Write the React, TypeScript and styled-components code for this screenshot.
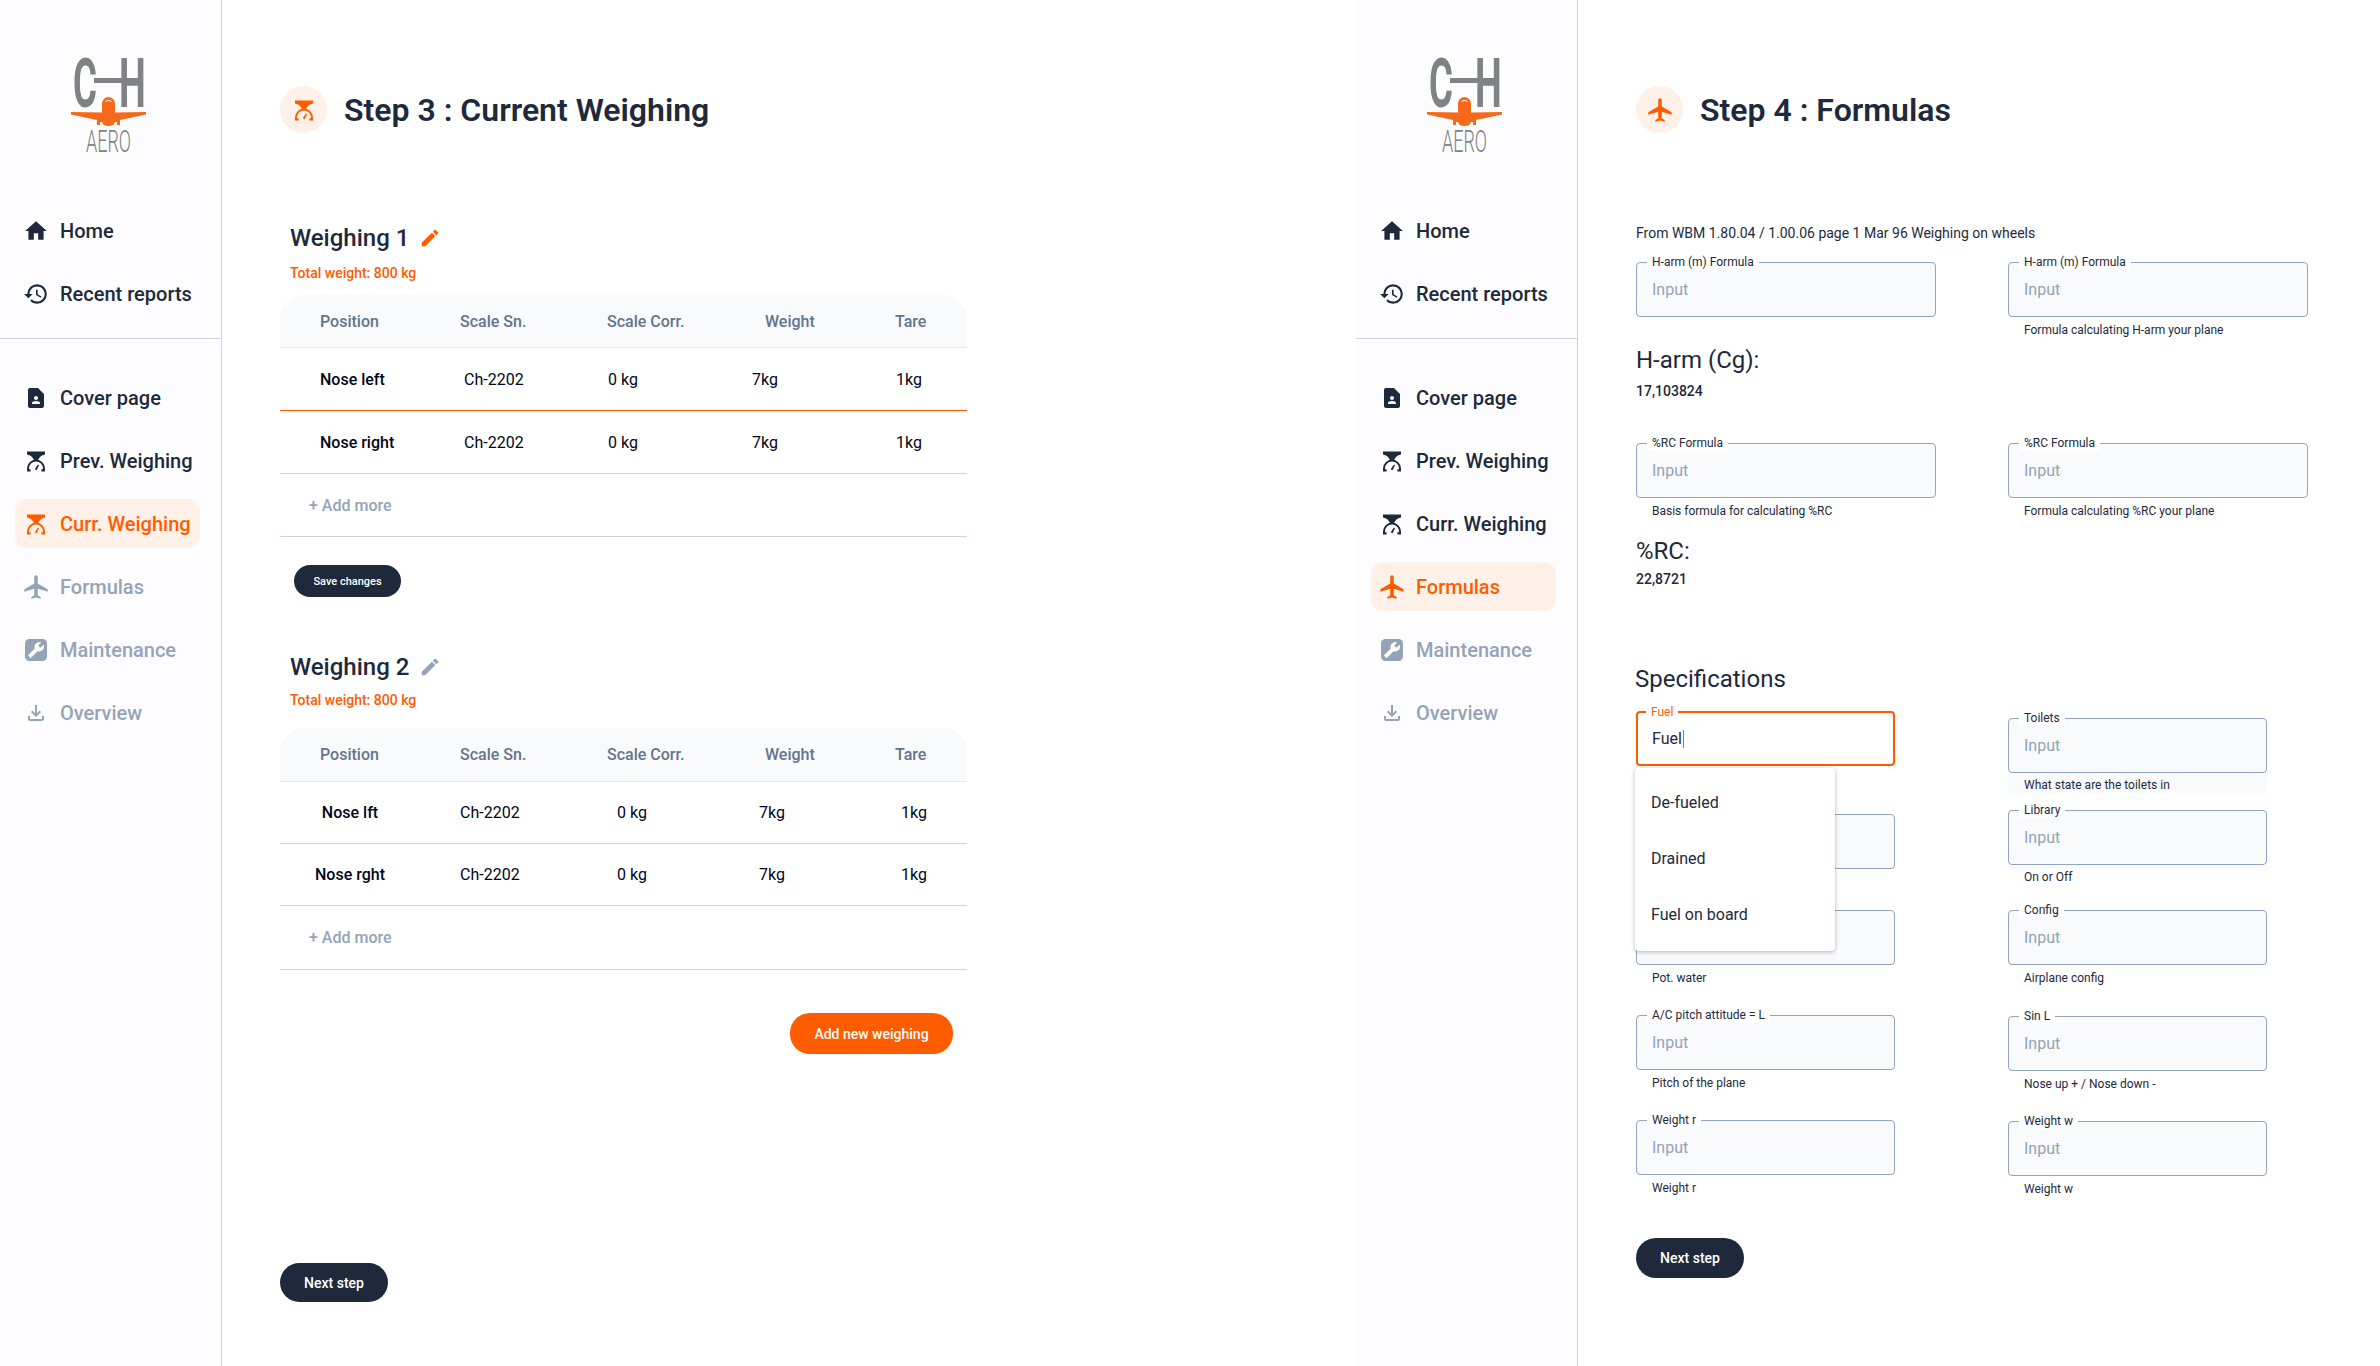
import React from 'react'
import styled, { createGlobalStyle } from 'styled-components'
import {
  MdHome,
  MdHistory,
  MdContactPage,
  MdAirplanemodeActive,
  MdOutlineFileDownload,
  MdEdit,
} from 'react-icons/md'

const ORANGE = '#ff5c00'
const DARK = '#1e293b'
const MUTED = '#94a3b8'

const GlobalStyle = createGlobalStyle`
  html, body { margin: 0; padding: 0; background: #fff; }
  body { font-family: Roboto, "Liberation Sans", sans-serif; color: ${DARK}; }
  * { box-sizing: border-box; }
`

const Page = styled.div`
  display: flex;
  width: 2380px;
  height: 1366px;
  overflow: hidden;
`

const Screen = styled.div<{ $width: number }>`
  display: flex;
  flex: none;
  width: ${(p) => p.$width}px;
  height: 100%;
`

const Sidebar = styled.aside`
  flex: none;
  width: 222px;
  height: 100%;
  padding-top: 40px;
  background: #fdfdff;
  border-right: 1px solid #cbd5e1;
`

const LogoWrap = styled.div`
  display: flex;
  justify-content: center;
  height: 120px;
  margin-bottom: 46px;
  padding-right: 1px;
`

const NavGroup = styled.nav<{ $divided?: boolean }>`
  display: flex;
  flex-direction: column;
  gap: 14px;
  padding-bottom: ${(p) => (p.$divided ? '20px' : '0')};
  margin-bottom: ${(p) => (p.$divided ? '34px' : '0')};
  border-bottom: ${(p) => (p.$divided ? '1px solid #cbd5e1' : 'none')};
`

const NavItem = styled.a<{ $tone: 'dark' | 'active' | 'muted' }>`
  display: flex;
  align-items: center;
  gap: 11px;
  height: 49px;
  margin: 0 21px 0 15px;
  padding-left: 8px;
  border-radius: 12px;
  font-size: 20px;
  font-weight: 500;
  color: ${(p) => (p.$tone === 'active' ? ORANGE : p.$tone === 'muted' ? MUTED : DARK)};
  background: ${(p) => (p.$tone === 'active' ? '#fff1e8' : 'transparent')};
`

const NavIcon = styled.span`
  display: flex;
  align-items: center;
  justify-content: center;
  flex: none;
  width: 26px;
  height: 26px;
  svg { flex: none; }
`

const Main = styled.main`
  flex: 1;
  padding: 86px 0 0 58px;
`

const StepHeader = styled.header`
  display: flex;
  align-items: center;
  gap: 17px;
  height: 47px;
`

const StepBadge = styled.span`
  display: flex;
  align-items: center;
  justify-content: center;
  width: 47px;
  height: 47px;
  border-radius: 50%;
  background: #fff1e8;
  color: ${ORANGE};
`

const StepTitle = styled.h1`
  margin: 0;
  font-size: 32px;
  line-height: 40px;
  font-weight: 600;
`

const WeighingTitle = styled.h2<{ $top: number }>`
  display: flex;
  align-items: center;
  gap: 10px;
  margin: ${(p) => p.$top}px 0 0 10px;
  font-size: 24px;
  line-height: 28px;
  font-weight: 500;
`

const TotalWeight = styled.div<{ $top: number; $after: number }>`
  margin: ${(p) => p.$top}px 0 ${(p) => p.$after}px 10px;
  font-size: 14px;
  line-height: 20px;
  font-weight: 500;
  color: ${ORANGE};
`

const WeighTable = styled.div`
  width: 687px;
`

const HeadRow = styled.div<{ $height: number }>`
  display: grid;
  grid-template-columns: 140px 147px 158px 130px 1fr;
  align-items: center;
  height: ${(p) => p.$height}px;
  padding-left: 40px;
  background: #f8fafc;
  border-bottom: 1px solid #e2e8f0;
  border-radius: 24px 24px 0 0;
  font-size: 16px;
  font-weight: 500;
  color: #64748b;
`

const BodyRow = styled.div<{ $height: number; $columns: string; $inset: number; $line?: string }>`
  display: grid;
  grid-template-columns: ${(p) => p.$columns};
  align-items: center;
  height: ${(p) => p.$height}px;
  padding-left: ${(p) => p.$inset}px;
  border-bottom: 1px solid ${(p) => p.$line ?? '#cbd5e1'};
  font-size: 16px;
  color: #020617;
`

const PositionCell = styled.span<{ $centered?: boolean }>`
  width: 140px;
  text-align: ${(p) => (p.$centered ? 'center' : 'left')};
  font-weight: 500;
`

const AddMoreRow = styled.div<{ $height: number }>`
  display: flex;
  align-items: center;
  height: ${(p) => p.$height}px;
  padding-left: 29px;
  border-bottom: 1px solid #cbd5e1;
  font-size: 16px;
  font-weight: 500;
  color: ${MUTED};
`

const PillButton = styled.button<{ $orange?: boolean; $width: number; $height: number; $small?: boolean }>`
  display: block;
  width: ${(p) => p.$width}px;
  height: ${(p) => p.$height}px;
  padding: 0;
  border: none;
  border-radius: 20px;
  font-family: inherit;
  font-size: ${(p) => (p.$small ? '11px' : '14px')};
  font-weight: 500;
  color: #fff;
  background: ${(p) => (p.$orange ? ORANGE : DARK)};
`

const SaveWrap = styled.div`
  margin: 28px 0 0 14px;
`

const AddWeighingWrap = styled.div`
  display: flex;
  justify-content: flex-end;
  width: 673px;
  margin-top: 43px;
`

const NextWrap = styled.div<{ $top: number }>`
  margin-top: ${(p) => p.$top}px;
`

const SourceNote = styled.p`
  margin: 90px 0 19px;
  font-size: 14px;
  line-height: 20px;
`

const FormulaRow = styled.div`
  display: grid;
  grid-template-columns: 300px 300px;
  column-gap: 72px;
`

const ResultTitle = styled.h3<{ $top: number }>`
  margin: ${(p) => p.$top}px 0 0;
  font-size: 24px;
  line-height: 28px;
  font-weight: 400;
`

const ResultValue = styled.div<{ $top: number; $after: number }>`
  margin: ${(p) => p.$top}px 0 ${(p) => p.$after}px;
  font-size: 14px;
  line-height: 20px;
  font-weight: 500;
`

const SpecTitle = styled.h3`
  margin: 76px 0 18px -1px;
  font-size: 24px;
  line-height: 28px;
  font-weight: 400;
`

const SpecGrid = styled.div`
  display: grid;
  grid-template-columns: 259px 259px;
  column-gap: 113px;
`

const SpecColumn = styled.div`
  display: flex;
  flex-direction: column;
`

const FieldWrap = styled.div<{ $top?: number }>`
  position: relative;
  margin-top: ${(p) => p.$top ?? 0}px;
`

const FieldBox = styled.div<{ $focused?: boolean }>`
  position: relative;
  display: flex;
  align-items: center;
  height: 55px;
  padding-left: ${(p) => (p.$focused ? '14px' : '15px')};
  border: ${(p) => (p.$focused ? `2px solid ${ORANGE}` : '1px solid #94a3c0')};
  border-radius: 4px;
  background: ${(p) => (p.$focused ? '#fff' : '#f8fafc')};
  font-size: 16px;
  color: ${(p) => (p.$focused ? DARK : MUTED)};
`

const FieldLabel = styled.label<{ $focused?: boolean }>`
  position: absolute;
  top: -9px;
  left: ${(p) => (p.$focused ? '8px' : '10px')};
  padding: 0 5px;
  background: #fff;
  font-size: 12px;
  line-height: 16px;
  color: ${(p) => (p.$focused ? ORANGE : DARK)};
`

const Caret = styled.span`
  width: 1px;
  height: 18px;
  margin-left: 1px;
  background: ${ORANGE};
`

const Helper = styled.div<{ $pad?: number; $band?: number }>`
  height: ${(p) => (p.$pad ?? 5) + 16}px;
  padding: ${(p) => p.$pad ?? 5}px 0 0 16px;
  font-size: 12px;
  line-height: 16px;
  background: ${(p) => (p.$band ? `linear-gradient(#f8fafc, #f8fafc) no-repeat top / 100% ${p.$band}px` : 'none')};
`

const Dropdown = styled.ul`
  position: absolute;
  top: 57px;
  left: -1px;
  z-index: 2;
  width: 200px;
  height: 183px;
  margin: 0;
  padding: 6px 0 0 16px;
  list-style: none;
  background: #fff;
  border-radius: 4px;
  box-shadow: 0 1px 4px rgba(15, 23, 42, 0.3);
`

const DropdownItem = styled.li`
  display: flex;
  align-items: center;
  height: 56px;
  font-size: 16px;
  color: ${DARK};
`

const ScaleIcon = () => (
  <svg width={24} height={24} viewBox="0 0 24 24" fill="currentColor">
    <path d="M3 2.500h18v3c-3.500.5-5.500 2.400-7 5.500h-4C8.500 7.900 6.500 6 3 5.500z" />
    <path
      d="M4 21.500v-2a8 8 0 0 1 16 0v2"
      fill="none"
      stroke="currentColor"
      strokeWidth="2"
    />
    <path d="M3 20.300h3.600v2.200H3zM17.400 20.300H21v2.200h-3.600z" />
    <path d="M10.700 20.300l3.200-4.800 1.100.7-2.400 5z" />
  </svg>
)

const WrenchIcon = () => (
  <svg width={24} height={24} viewBox="0 0 24 24">
    <rect x="1" y="1" width="22" height="22" rx="4.500" fill="currentColor" />
    <path
      transform="translate(12 12) scale(-0.72 0.72) translate(-12 -12)"
      fill="#fff"
      d="M22.700 19l-9.100-9.100c.9-2.300.4-5-1.500-6.900-2-2-5-2.400-7.400-1.300L9 6 6 9 1.600 4.700C.4 7.100.9 10.100 2.900 12.100c1.900 1.900 4.600 2.400 6.900 1.500l9.100 9.100c.4.4 1 .4 1.400 0l2.300-2.300c.5-.4.5-1.100.1-1.400z"
    />
  </svg>
)

// logo letters stay real text, scaled to the narrow shape of the mark
const Logo = () => (
  <svg width="80" height="120" viewBox="0 -15 80 120" fontFamily="Roboto, sans-serif">
    <text transform="translate(3 52) scale(0.53 1)" fontSize="69" fontWeight="700" fill="#808285">
      C
    </text>
    <rect x="24" y="23" width="28" height="5" fill="#808285" />
    <text transform="translate(49 52) scale(0.55 1)" fontSize="69" fontWeight="700" fill="#808285">
      H
    </text>
    <path fill="#fff" d="M28 57V44h21v13z" />
    <path
      fill="#f7691a"
      d="M32 57.500V49c0-4 3-7 6.500-7s6.500 3 6.500 7v8.500L76 57v2.500L50 65v5h-3v-3h-2c-1 3-3 4-6.500 4s-5.500-1-6.500-4h-2v3h-3v-5L1 59.500V57z"
    />
    <path d="M35.500 46.500c2-1.300 4-1.300 6 0" fill="none" stroke="#fff" strokeWidth="1" />
    <text transform="translate(16 97) scale(0.58 1)" fontSize="31" fontWeight="300" fill="#808285">
      AERO
    </text>
  </svg>
)

type Active = 'weighing' | 'formulas'
type Tone = 'dark' | 'active' | 'muted'

const SideNav = ({ active }: { active: Active }) => {
  const lower: { label: string; icon: React.ReactNode; tone: Tone }[] = [
    { label: 'Cover page', icon: <MdContactPage size={24} />, tone: 'dark' },
    { label: 'Prev. Weighing', icon: <ScaleIcon />, tone: 'dark' },
    { label: 'Curr. Weighing', icon: <ScaleIcon />, tone: active === 'weighing' ? 'active' : 'dark' },
    { label: 'Formulas', icon: <MdAirplanemodeActive size={28} />, tone: active === 'formulas' ? 'active' : 'muted' },
    { label: 'Maintenance', icon: <WrenchIcon />, tone: 'muted' },
    { label: 'Overview', icon: <MdOutlineFileDownload size={24} />, tone: 'muted' },
  ]
  return (
    <Sidebar>
      <LogoWrap>
        <Logo />
      </LogoWrap>
      <NavGroup $divided>
        <NavItem $tone="dark">
          <NavIcon><MdHome size={26} /></NavIcon>
          Home
        </NavItem>
        <NavItem $tone="dark">
          <NavIcon><MdHistory size={26} /></NavIcon>
          Recent reports
        </NavItem>
      </NavGroup>
      <NavGroup>
        {lower.map((item) => (
          <NavItem key={item.label} $tone={item.tone}>
            <NavIcon>{item.icon}</NavIcon>
            {item.label}
          </NavItem>
        ))}
      </NavGroup>
    </Sidebar>
  )
}

const Field = ({
  label,
  helper,
  top,
  pad,
  band,
}: {
  label?: string
  helper?: string
  top?: number
  pad?: number
  band?: number
}) => (
  <FieldWrap $top={top}>
    <FieldBox>
      {label && <FieldLabel>{label}</FieldLabel>}
      {label && 'Input'}
    </FieldBox>
    {helper && <Helper $pad={pad} $band={band}>{helper}</Helper>}
  </FieldWrap>
)

const HEAD_CELLS = ['Position', 'Scale Sn.', 'Scale Corr.', 'Weight', 'Tare']

const WeighingOne = () => (
  <WeighTable>
    <HeadRow $height={53}>
      {HEAD_CELLS.map((c) => <span key={c}>{c}</span>)}
    </HeadRow>
    {['Nose left', 'Nose right'].map((pos, i) => (
      <BodyRow key={pos} $height={63} $columns="144px 144px 144px 144px 1fr" $inset={40} $line={i === 0 ? ORANGE : undefined}>
        <PositionCell>{pos}</PositionCell>
        <span>Ch-2202</span>
        <span>0 kg</span>
        <span>7kg</span>
        <span>1kg</span>
      </BodyRow>
    ))}
    <AddMoreRow $height={63}>+ Add more</AddMoreRow>
  </WeighTable>
)

const WeighingTwo = () => (
  <WeighTable>
    <HeadRow $height={54}>
      {HEAD_CELLS.map((c) => <span key={c}>{c}</span>)}
    </HeadRow>
    {['Nose lft', 'Nose rght'].map((pos) => (
      <BodyRow key={pos} $height={62} $columns="180px 157px 142px 142px 1fr" $inset={0}>
        <PositionCell $centered>{pos}</PositionCell>
        <span>Ch-2202</span>
        <span>0 kg</span>
        <span>7kg</span>
        <span>1kg</span>
      </BodyRow>
    ))}
    <AddMoreRow $height={64}>+ Add more</AddMoreRow>
  </WeighTable>
)

export default function App() {
  return (
    <Page>
      <GlobalStyle />
      <Screen $width={1356}>
        <SideNav active="weighing" />
        <Main>
          <StepHeader>
            <StepBadge><ScaleIcon /></StepBadge>
            <StepTitle>Step 3 : Current Weighing</StepTitle>
          </StepHeader>

          <WeighingTitle $top={91}>
            Weighing 1
            <MdEdit size={22} color={ORANGE} />
          </WeighingTitle>
          <TotalWeight $top={11} $after={12}>Total weight: 800 kg</TotalWeight>
          <WeighingOne />
          <SaveWrap>
            <PillButton $width={107} $height={32} $small>Save changes</PillButton>
          </SaveWrap>

          <WeighingTitle $top={56}>
            Weighing 2
            <MdEdit size={22} color={MUTED} />
          </WeighingTitle>
          <TotalWeight $top={9} $after={18}>Total weight: 800 kg</TotalWeight>
          <WeighingTwo />
          <AddWeighingWrap>
            <PillButton $orange $width={163} $height={41}>Add new weighing</PillButton>
          </AddWeighingWrap>
          <NextWrap $top={209}>
            <PillButton $width={108} $height={39}>Next step</PillButton>
          </NextWrap>
        </Main>
      </Screen>

      <Screen $width={1024}>
        <SideNav active="formulas" />
        <Main>
          <StepHeader>
            <StepBadge><MdAirplanemodeActive size={28} /></StepBadge>
            <StepTitle>Step 4 : Formulas</StepTitle>
          </StepHeader>

          <SourceNote>From WBM 1.80.04 / 1.00.06 page 1 Mar 96 Weighing on wheels</SourceNote>
          <FormulaRow>
            <Field label="H-arm (m) Formula" />
            <Field label="H-arm (m) Formula" helper="Formula calculating H-arm your plane" />
          </FormulaRow>
          <ResultTitle $top={8}>H-arm (Cg):</ResultTitle>
          <ResultValue $top={7} $after={42}>17,103824</ResultValue>
          <FormulaRow>
            <Field label="%RC Formula" helper="Basis formula for calculating %RC" />
            <Field label="%RC Formula" helper="Formula calculating %RC your plane" />
          </FormulaRow>
          <ResultTitle $top={18}>%RC:</ResultTitle>
          <ResultValue $top={4} $after={0}>22,8721</ResultValue>

          <SpecTitle>Specifications</SpecTitle>
          <SpecGrid>
            <SpecColumn>
              <FieldWrap>
                <FieldBox $focused>
                  <FieldLabel $focused>Fuel</FieldLabel>
                  Fuel
                  <Caret />
                </FieldBox>
                <Dropdown>
                  <DropdownItem>De-fueled</DropdownItem>
                  <DropdownItem>Drained</DropdownItem>
                  <DropdownItem>Fuel on board</DropdownItem>
                </Dropdown>
              </FieldWrap>
              <Field top={48} />
              <Field top={41} helper="Pot. water" />
              <Field top={29} label="A/C pitch attitude = L" helper="Pitch of the plane" />
              <Field top={29} label="Weight r" helper="Weight r" />
            </SpecColumn>
            <SpecColumn>
              <Field top={7} label="Toilets" helper="What state are the toilets in" pad={4} band={20} />
              <Field top={17} label="Library" helper="On or Off" pad={4} band={4} />
              <Field top={25} label="Config" helper="Airplane config" />
              <Field top={30} label="Sin L" helper="Nose up + / Nose down -" />
              <Field top={29} label="Weight w" helper="Weight w" />
            </SpecColumn>
          </SpecGrid>
          <NextWrap $top={41}>
            <PillButton $width={108} $height={40}>Next step</PillButton>
          </NextWrap>
        </Main>
      </Screen>
    </Page>
  )
}
